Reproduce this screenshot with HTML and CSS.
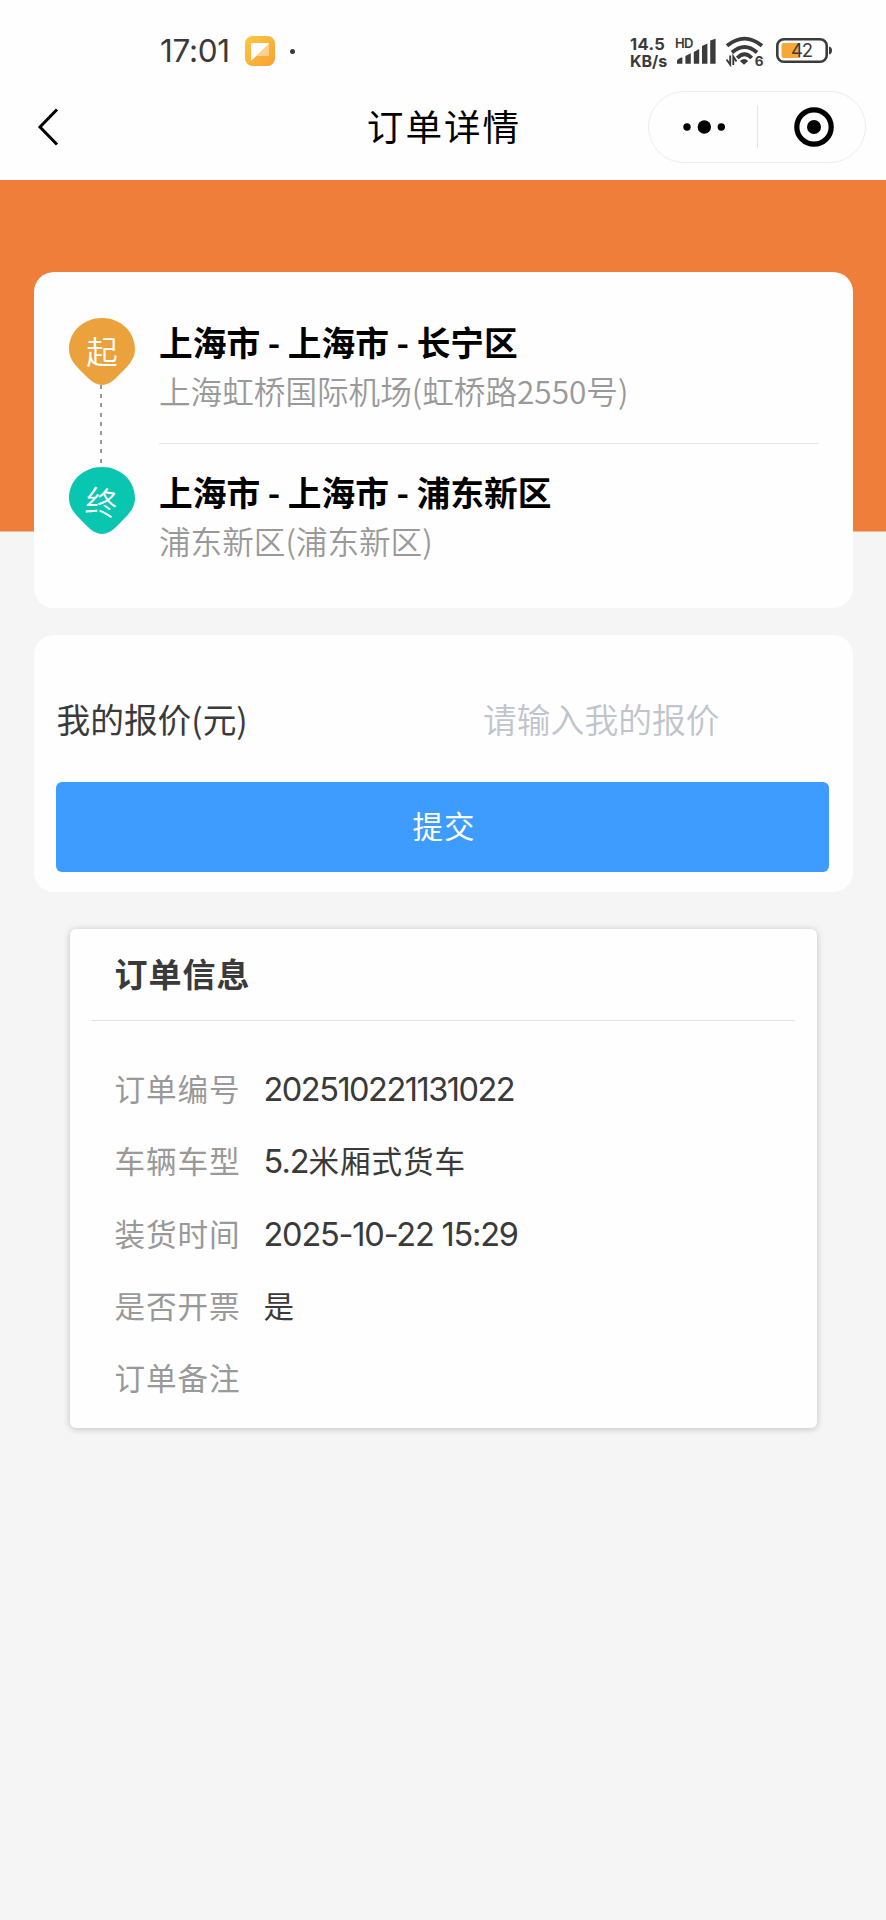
FILE: index.html
```html
<!DOCTYPE html>
<html lang="zh-CN">
<head>
<meta charset="utf-8">
<title>订单详情</title>
<link rel="stylesheet" href="styles.css">
</head>
<body>
<header class="top">
  <div class="status">
    <div class="status-left">
      <span class="clock">17:01</span>
      <svg class="app-icon" width="30" height="30" viewBox="0 0 30 30">
        <defs><linearGradient id="g" x1="0" y1="0" x2="1" y2="1"><stop offset="0" stop-color="#fbc93f"/><stop offset="1" stop-color="#f8a034"/></linearGradient></defs>
        <rect width="30" height="30" rx="7.5" fill="url(#g)"/>
        <path d="M6.5 7.500H23.500L6.500 24Z" fill="#fff" stroke="#fff" stroke-linejoin="round"/>
        <path d="M24 7.500V20H11Z" fill="#fff" opacity=".42"/>
      </svg>
      <span class="dot"></span>
    </div>
    <div class="status-right">
      <div class="speed"><span class="speed-num">14.5</span><span>KB/s</span></div>
      <svg class="signal" width="42" height="30" viewBox="0 0 42 30">
        <text class="hd" x="0" y="12" textLength="18.500">HD</text>
        <g fill="#3b3b3b">
          <path d="M2 25Q2 23 7.400 21.300V27.700H2Z"/>
          <path d="M10.400 20L15.800 17.300V27.700H10.400Z"/>
          <path d="M18.800 16L24.200 13V27.700H18.800Z"/>
          <path d="M27 10L32.400 7.500V27.700H27Z"/>
          <path d="M35.200 4.500L40.600 2.800V27.700H35.200Z"/>
        </g>
      </svg>
      <svg class="wifi" width="40" height="30" viewBox="0 0 40 30">
        <g fill="none" stroke="#3b3b3b" stroke-width="3.800">
          <path d="M2 9.800Q19.500-4.500 37 9.800"/>
          <path d="M7 16.500Q19.500 5.500 32 16.500"/>
          <path d="M12.300 22Q19.500 14.500 26.700 22"/>
        </g>
        <path d="M14.800 25Q19.500 21 23.200 25L19 28.800Z" fill="#3b3b3b"/>
        <g fill="none" stroke="#3b3b3b" stroke-width="1.900"><path d="M1.500 23.500L5.200 28.500V19.500"/><path d="M8.300 29V20.500L11.500 25.500"/></g>
        <text class="six" x="29.800" y="29.500">6</text>
      </svg>
      <svg class="battery" width="57" height="26" viewBox="0 0 57 26">
        <rect x="1.300" y="1.300" width="49.400" height="22.400" rx="6.500" fill="none" stroke="#3b3b3b" stroke-width="2.600"/>
        <path d="M8 5H24V20H8Q5.500 20 5.500 17.500V7.500Q5.500 5 8 5Z" fill="#f5a934"/>
        <path d="M53 8.500Q56 9 56 12.500T53 16.500Z" fill="#3b3b3b"/>
        <text class="pct" x="15" y="19.300" textLength="22">42</text>
      </svg>
    </div>
  </div>
  <div class="nav">
    <svg class="back" width="22" height="40" viewBox="0 0 22 40"><path d="M20 2.500L3 20L20 37.500" fill="none" stroke="#000" stroke-width="3"/></svg>
    <h1 class="title">订单详情</h1>
    <div class="capsule">
      <svg width="42" height="16" viewBox="0 0 42 16"><circle cx="4" cy="8" r="3.700"/><circle cx="21.300" cy="8" r="6.700"/><circle cx="38.300" cy="8" r="3.700"/></svg>
      <span class="capsule-line"></span>
      <svg width="42" height="42" viewBox="0 0 42 42"><circle cx="21" cy="21" r="17.200" fill="none" stroke="#000" stroke-width="5.200"/><circle cx="21" cy="21" r="7"/></svg>
    </div>
  </div>
</header>
<main class="page">
  <section class="card route">
    <div class="track">
      <div class="pin"><svg width="66" height="67" viewBox="0 0 66 67"><path d="M33 0C51.500 0 66 13.500 66 31C66 42 59 48 47 60Q40 67 33 67T19 60C7 48 0 42 0 31C0 13.500 14.500 0 33 0Z" fill="#eba23c"/></svg><span class="pin-text">起</span></div>
      <span class="dash"></span>
      <div class="pin"><svg width="66" height="67" viewBox="0 0 66 67"><path d="M33 0C51.500 0 66 13.500 66 31C66 42 59 48 47 60Q40 67 33 67T19 60C7 48 0 42 0 31C0 13.500 14.500 0 33 0Z" fill="#08c6b0"/></svg><span class="pin-text pin-end">终</span></div>
    </div>
    <div class="stops">
      <div class="stop"><div class="area">上海市 - 上海市 - 长宁区</div><div class="addr">上海虹桥国际机场(虹桥路2550号)</div></div>
      <div class="stop"><div class="area">上海市 - 上海市 - 浦东新区</div><div class="addr">浦东新区(浦东新区)</div></div>
    </div>
  </section>
  <section class="card quote">
    <div class="field"><label class="field-label">我的报价(元)</label><span class="placeholder">请输入我的报价</span></div>
    <button class="submit">提交</button>
  </section>
  <section class="info">
    <h2 class="info-title">订单信息</h2>
    <dl class="rows">
      <div class="row"><dt>订单编号</dt><dd class="num">202510221131022</dd></div>
      <div class="row"><dt>车辆车型</dt><dd><span class="num model-size">5.2</span>米厢式货车</dd></div>
      <div class="row"><dt>装货时间</dt><dd class="num time">2025-10-22 15:29</dd></div>
      <div class="row"><dt>是否开票</dt><dd>是</dd></div>
      <div class="row"><dt>订单备注</dt><dd></dd></div>
    </dl>
  </section>
</main>
</body>
</html>
```

FILE: styles.css
```css
* { box-sizing: border-box; }
body {
  margin: 0;
  min-height: 1920px;
  background: #f5f5f5;
  font-family: "Noto Sans CJK SC", sans-serif;
  color: #3a3a3a;
}
.top { height: 180px; background: #fefefe; }
.status {
  display: flex;
  justify-content: space-between;
  height: 90px;
  padding: 36px 53px 0 160px;
}
.status-left { display: flex; align-items: center; height: 30px; }
.clock {
  width: 85px;
  font: 400 31.5px/32px Inter, sans-serif;
  letter-spacing: -0.3px;
  white-space: nowrap;
}
.dot { width: 5px; height: 5px; margin-left: 14.5px; border-radius: 50%; background: #3b3b3b; }
.status-right { display: flex; height: 30px; }
.speed {
  display: flex;
  flex-direction: column;
  gap: 1px;
  width: 45px;
  font: 700 16px/16px Inter, sans-serif;
}
.speed-num { font-size: 16.5px; letter-spacing: .4px; }
.signal { margin-right: 8px; }
.wifi { margin-right: 11px; overflow: visible; }
.battery { margin-top: 2px; }
.hd { font: 600 13px Inter, sans-serif; fill: #3b3b3b; }
.six { font: 700 13.5px Inter, sans-serif; fill: #3b3b3b; }
.pct { font: 400 18.5px Inter, sans-serif; fill: #3b3b3b; }

.nav {
  display: grid;
  grid-template-columns: 218px 1fr 218px;
  align-items: center;
  height: 73px;
  padding: 0 20px;
}
.back { margin-left: 17px; }
.title {
  margin: 0 0 2px 2px;
  font-size: 36.6px;
  font-weight: 400;
  line-height: 50px;
  letter-spacing: 2px;
  text-align: center;
  color: #000;
}
.capsule {
  display: flex;
  align-items: center;
  width: 218px;
  height: 72px;
  padding-left: 33.5px;
  border: 1px solid #ededed;
  border-radius: 36px;
}
.capsule-line { width: 1px; height: 43px; margin: 0 35px 0 32.5px; background: #e5e5e5; }

.page {
  display: flex;
  flex-direction: column;
  padding: 92px 33.500px 0;
  background: linear-gradient(#ef7e3a, #ef7e3a) no-repeat 0 0 / 100% 351.500px;
}
.card { border-radius: 20px; background: #fefefe; }
.route { display: flex; height: 336px; padding: 46px 34px 0 35.500px; }
.track { display: flex; flex-direction: column; align-items: center; width: 66px; }
.pin { display: grid; height: 67px; }
.pin svg, .pin-text { grid-area: 1 / 1; }
.pin-text {
  place-self: center;
  margin-bottom: 3px;
  font-size: 31.5px;
  font-weight: 350;
  line-height: 40px;
  color: #fff;
}
.pin-end { margin-bottom: 2px; transform: rotate(8deg); }
.dash {
  width: 2px;
  height: 82px;
  margin-right: 3px;
  background: repeating-linear-gradient(#999 0 4px, transparent 4px 9.200px);
}
.stops { flex: 1; margin-left: 24px; }
.stop { height: 149.500px; }
.stop:first-child { height: 126px; margin-bottom: 23.500px; border-bottom: 1px solid #e6e6e6; }
.area { height: 48px; font-size: 33.7px; font-weight: 700; line-height: 48px; color: #000; white-space: nowrap; }
.addr { height: 50px; font-size: 31.6px; font-weight: 350; line-height: 48px; color: #999; white-space: nowrap; }

.quote { height: 257.500px; margin-top: 26.500px; padding: 61px 23.500px 0 22.500px; }
.field { display: flex; height: 86.500px; }
.field-label { width: 427px; padding-left: .5px; font-size: 33.7px; font-weight: 400; line-height: 46px; }
.placeholder { font-size: 33.8px; font-weight: 350; line-height: 46px; color: #c0c4cc; }
.submit {
  display: block;
  width: 100%;
  height: 90px;
  padding: 0 0 4px 3px;
  border: 0;
  border-radius: 6px;
  background: #3e9bff;
  font: 400 30.5px/86px "Noto Sans CJK SC", sans-serif;
  letter-spacing: 1px;
  color: #fff;
}

.info {
  height: 499px;
  margin: 37px 36px 0;
  padding: 0 22px;
  border-radius: 6px;
  background: #fefefe;
  box-shadow: 0 1px 7px rgba(0, 0, 0, .22);
}
.info-title {
  height: 92px;
  margin: 0;
  padding: 19px 23px 0;
  border-bottom: 1px solid #e2e2e2;
  font-size: 33px;
  font-weight: 700;
  line-height: 50px;
  letter-spacing: 1px;
}
.rows { margin: 0; padding: 31px 23px 0; }
.row { display: flex; height: 72.300px; font-size: 30.6px; line-height: 72px; letter-spacing: .9px; }
dt { width: 149px; font-weight: 400; color: #999; }
dd { margin: 0; white-space: nowrap; }
.num { font-family: Inter, sans-serif; font-size: 32.500px; letter-spacing: -1.5px; }
dd.num { padding-top: 2px; }
.time { letter-spacing: -1.2px; }
.model-size { letter-spacing: -1px; }
```
